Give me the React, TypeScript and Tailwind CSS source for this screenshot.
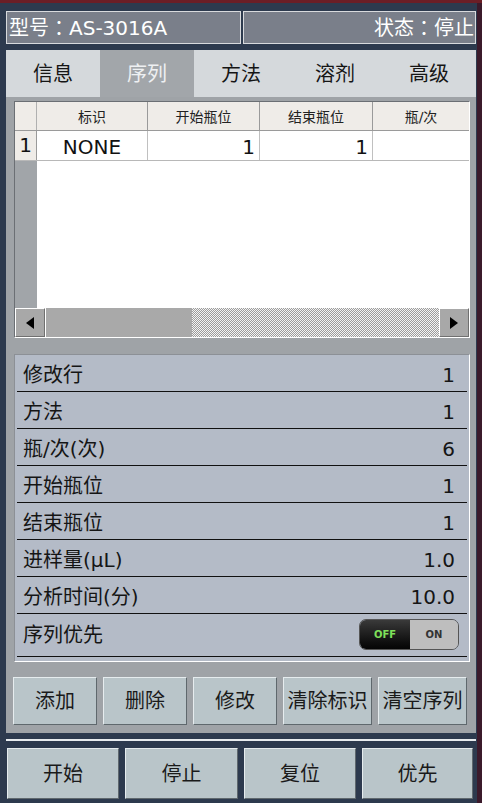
import React from "react";

const font = { fontFamily: '"DejaVu Sans", "Noto Sans CJK SC", sans-serif' };
const jp = { fontFamily: '"Noto Sans CJK JP", sans-serif' };

const tabs = ["信息", "序列", "方法", "溶剂", "高级"];
const rows: [string, string][] = [
  ["修改行", "1"],
  ["方法", "1"],
  ["瓶/次(次)", "6"],
  ["开始瓶位", "1"],
  ["结束瓶位", "1"],
  ["进样量(μL)", "1.0"],
  ["分析时间(分)", "10.0"],
];

function Btn({ label, w }: { label: string; w: string }) {
  return (
    <div
      className={`${w} h-full flex items-center justify-center bg-[#b9c5c9] border border-t-[#e6ecee] border-l-[#e6ecee] border-b-[#5f686d] border-r-[#5f686d] text-[20px] text-[#1a1a1a]`}
    >
      {label}
    </div>
  );
}

export default function App() {
  return (
    <div className="w-[482px] h-[803px] bg-[#2d3a4e] flex flex-col overflow-hidden" style={font}>
      <div className="h-[3px] bg-[#6b1e26] shrink-0" />
      <div className="flex flex-1">
        <div className="w-[477px] pl-[6px] pr-[1px] flex flex-col">
          {/* header */}
          <div className="mt-[8px] h-[33px] flex gap-[2px]">
            <div className="w-[235px] h-full border border-[#d8dadd] bg-[#7a7f8a] text-white text-[20px] flex items-center pl-[2px] pt-[1px] leading-none">
              型号<span style={jp}>：</span>AS-3016A
            </div>
            <div className="flex-1 h-full border border-[#d8dadd] bg-[#7a7f8a] text-white text-[20px] flex items-center justify-end pr-[1px] pt-[1px] leading-none">
              状态<span style={jp}>：</span>停止
            </div>
          </div>
          {/* tabs */}
          <div className="mt-[6px] h-[47px] flex bg-[#d5d9dc]">
            {tabs.map((t, i) => (
              <div
                key={t}
                className={`flex-1 flex items-center justify-center text-[20px] ${
                  i === 1 ? "bg-[#a2a6aa] text-[#eef0f2]" : "text-[#151515]"
                }`}
              >
                {t}
              </div>
            ))}
          </div>
          {/* content */}
          <div className="h-[636px] bg-[#9fa3a7] flex flex-col">
            {/* table */}
            <div className="mt-[4px] ml-[8px] w-[456px] h-[237px] border border-t-[#6b6f74] border-l-[#6b6f74] border-b-white border-r-white flex flex-col bg-white">
              <div className="flex h-[29px] bg-[#efece8] border-b border-[#9a9a9a] text-[14px] text-[#222]">
                <div className="w-[22px] border-r border-[#b0b0b0]" />
                <div className="w-[111px] border-r border-[#9a9a9a] flex items-center justify-center pt-[2px]">标识</div>
                <div className="w-[112px] border-r border-[#9a9a9a] flex items-center justify-center pt-[2px]">开始瓶位</div>
                <div className="w-[113px] border-r border-[#9a9a9a] flex items-center justify-center pt-[2px]">结束瓶位</div>
                <div className="flex-1 flex items-center justify-center pt-[2px]">瓶/次</div>
              </div>
              <div className="flex h-[30px] border-b border-[#b8b8b8] text-[20px] text-[#111]">
                <div className="w-[22px] bg-[#efece8] border-r border-[#9a9a9a] flex items-end justify-center">1</div>
                <div className="w-[111px] border-r border-[#c0c0c0] flex items-center justify-center pt-[2px]">NONE</div>
                <div className="w-[112px] border-r border-[#c0c0c0] flex items-center justify-end pr-[4px] pt-[2px]">1</div>
                <div className="w-[113px] border-r border-[#c0c0c0] flex items-center justify-end pr-[4px] pt-[2px]">1</div>
                <div className="flex-1" />
              </div>
              <div className="flex flex-1">
                <div className="w-[22px] bg-[#a1a5a9]" />
                <div className="flex-1 bg-white" />
              </div>
              <div className="flex h-[29px] bg-[#a8a8a8]">
                <div className="w-[30px] border border-t-white border-l-white border-b-[#707070] border-r-[#707070] flex items-center justify-center">
                  <svg width="8" height="12" viewBox="0 0 8 12"><path d="M8 0 L0 6 L8 12 Z" fill="#000" /></svg>
                </div>
                <div className="w-[147px] bg-[#a9a9a9] border-l border-white" />
                <div className="flex-1 bg-[repeating-conic-gradient(#9c9c9c_0_25%,#f4f4f4_0_50%)] bg-[length:2px_2px]" />
                <div className="w-[30px] border border-t-white border-l-white border-b-[#707070] border-r-[#707070] flex items-center justify-center">
                  <svg width="8" height="12" viewBox="0 0 8 12"><path d="M0 0 L8 6 L0 12 Z" fill="#000" /></svg>
                </div>
              </div>
            </div>
            {/* form */}
            <div className="mt-[16px] ml-[8px] w-[456px] h-[308px] bg-[#b4bbc7] border border-t-[#8c9096] border-l-[#8c9096] border-b-white border-r-white px-[2px]">
              {rows.map(([l, v]) => (
                <div key={l} className="h-[37px] border-b border-[#111] flex items-center justify-between pl-[6px] pr-[12px] pt-[3px] text-[20px] text-[#151515]">
                  <span>{l}</span>
                  <span>{v}</span>
                </div>
              ))}
              <div className="h-[43px] border-b border-[#111] flex items-center justify-between pl-[6px] pr-[8px] text-[20px] text-[#151515]">
                <span>序列优先</span>
                <div className="w-[100px] h-[31px] rounded-[7px] overflow-hidden flex border border-[#555] mb-[1px]">
                  <div className="w-[50px] bg-gradient-to-b from-[#3a3a3a] to-[#050505] flex items-center justify-center text-[10px] font-bold text-[#7fe05a]">OFF</div>
                  <div className="flex-1 bg-[#bebebe] flex items-center justify-center text-[10px] font-bold text-[#333]">ON</div>
                </div>
              </div>
            </div>
            {/* buttons */}
            <div className="mt-[15px] ml-[7px] h-[48px] flex gap-[6px]">
              <Btn label="添加" w="w-[84px]" />
              <Btn label="删除" w="w-[84px]" />
              <Btn label="修改" w="w-[84px]" />
              <Btn label="清除标识" w="w-[89px]" />
              <Btn label="清空序列" w="w-[89px]" />
            </div>
          </div>
          <div className="mt-[6px] h-[2px] bg-[#e8ecef]" />
          <div className="mt-[7px] h-[51px] flex gap-[6px] px-[1px]">
            <Btn label="开始" w="w-[112px]" />
            <Btn label="停止" w="w-[113px]" />
            <Btn label="复位" w="w-[112px]" />
            <Btn label="优先" w="w-[111px]" />
          </div>
        </div>
        <div className="w-[5px] bg-[#3b1a2b]" />
      </div>
    </div>
  );
}
